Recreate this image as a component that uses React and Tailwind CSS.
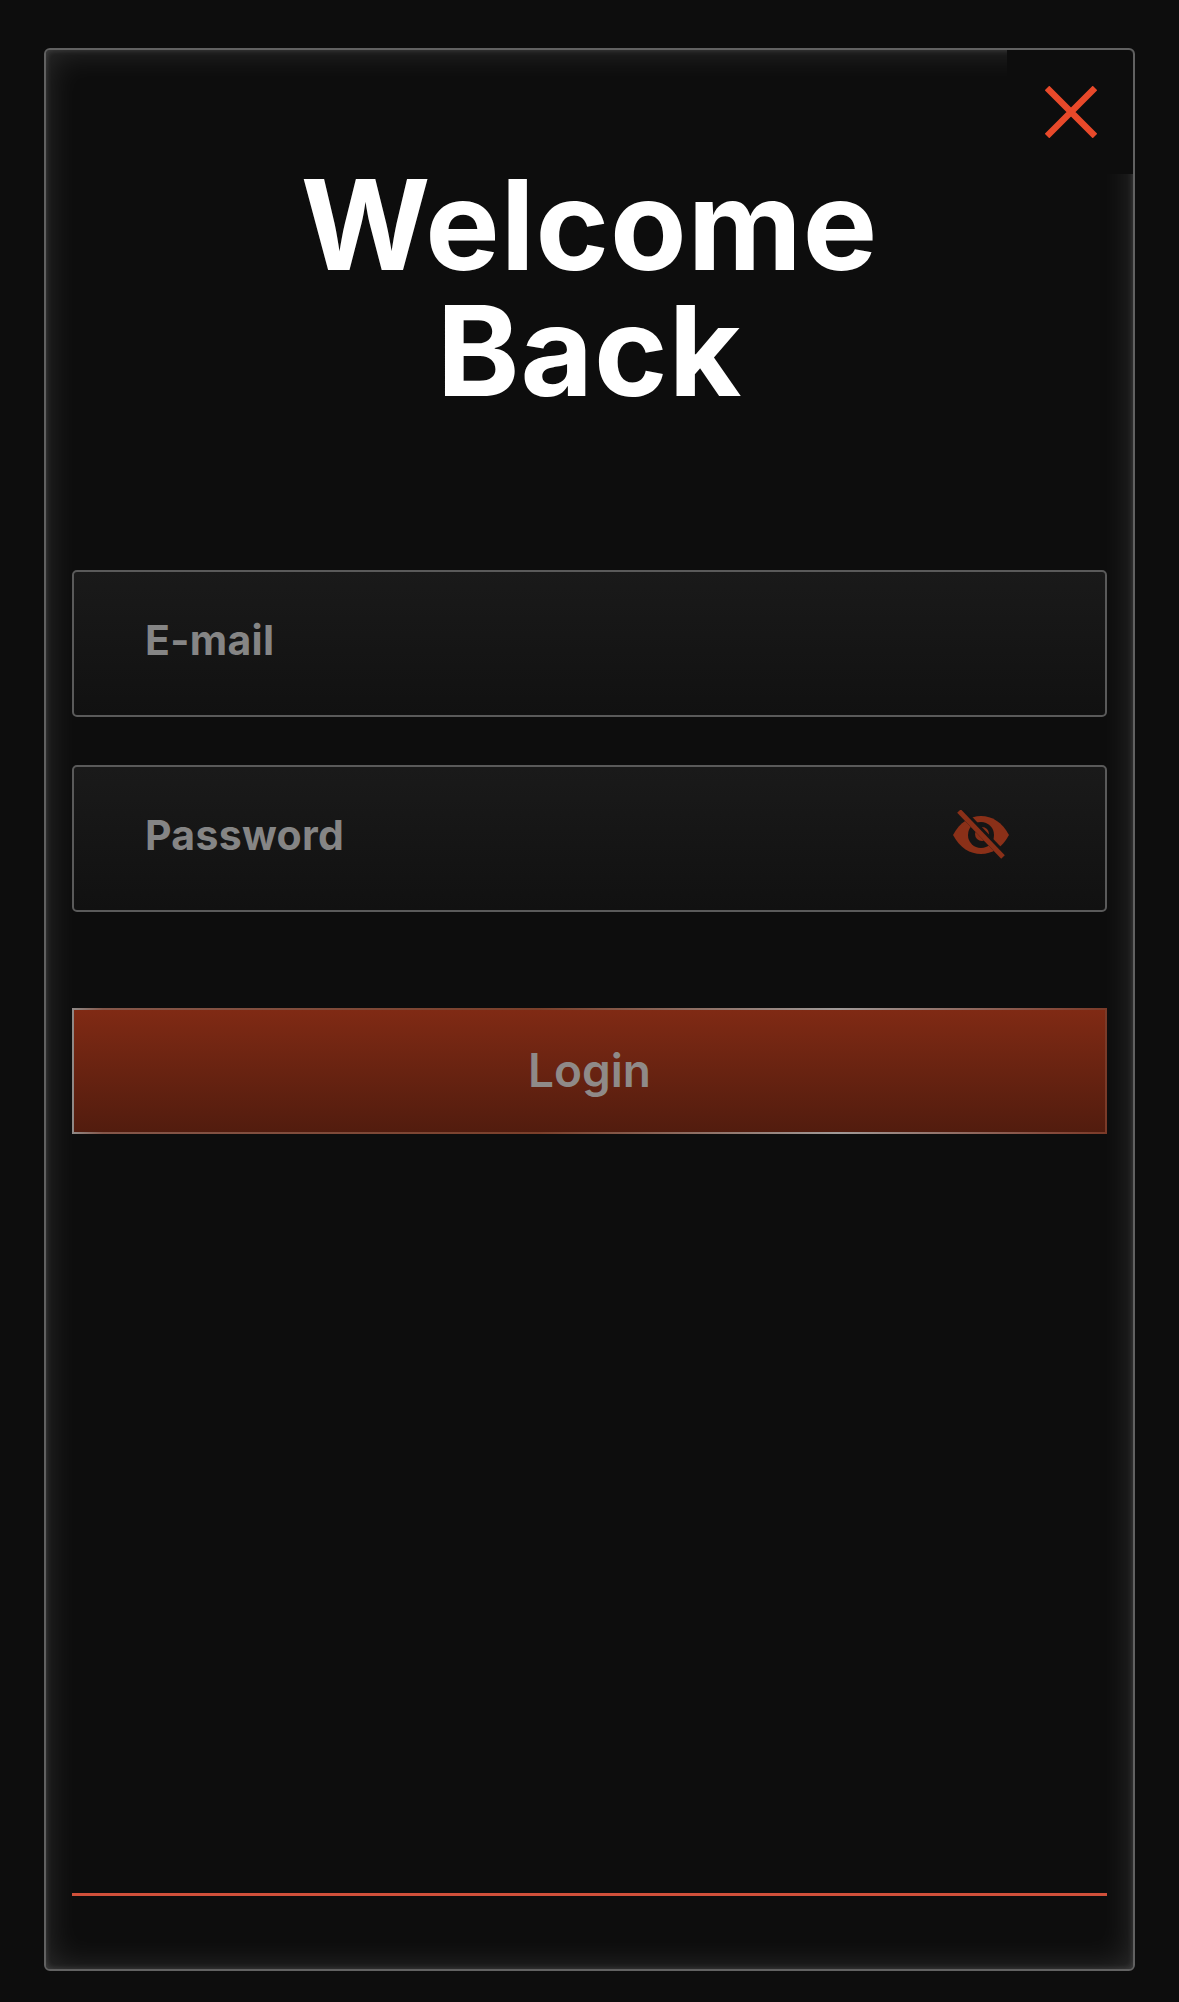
import React from "react";

function EyeOff() {
  return (
    <svg width="58" height="50" viewBox="0 0 58 50" className="block">
      <path d="M1 25 C8 12 18 6 29 6 C40 6 50 12 57 25 C50 38 40 44 29 44 C18 44 8 38 1 25 Z" fill="#8a3018" />
      <circle cx="29" cy="25" r="13" fill="#151515" />
      <circle cx="30" cy="24" r="7" fill="#8a3018" />
      <line x1="9" y1="1" x2="53" y2="47" stroke="#151515" strokeWidth="8" />
      <line x1="7" y1="1" x2="51" y2="47" stroke="#8a3018" strokeWidth="5" />
    </svg>
  );
}

function Field({ label, children }) {
  return (
    <div className="h-[147px] rounded-[5px] border-2 border-[#5a5a5a] bg-gradient-to-b from-[#1a1a1a] to-[#111111] pl-[71px] pr-[95px] pt-[43px] flex items-start justify-between">
      <span className="text-[41px] leading-[50px] font-bold text-[#858585] tracking-[0.3px]">{label}</span>
      {children}
    </div>
  );
}

export default function App() {
  return (
    <div className="w-[1179px] h-[2002px] bg-[#0d0d0d] pt-[48px] pl-[44px] pr-[44px] font-['Inter','Liberation_Sans',sans-serif]">
      <div className="relative h-[1923px] rounded-[6px] border-2 border-[#616161] shadow-[inset_0_0_34px_rgba(255,255,255,0.14),inset_0_0_6px_rgba(255,255,255,0.16)] bg-[#0d0d0d] px-[26px] pt-[112px]">
        <div className="absolute right-0 top-0 w-[126px] h-[124px] bg-[#0d0d0d] rounded-tr-[5px] flex items-center justify-center">
          <svg width="52" height="52" viewBox="0 0 52 52" className="mt-[-1px] ml-[2px]">
            <path d="M2 2 L50 50 M50 2 L2 50" stroke="#e8492a" strokeWidth="6.5" fill="none" />
          </svg>
        </div>

        <h1 className="text-center text-white text-[125px] leading-[126px] font-bold tracking-[1px]">
          Welcome
          <br />
          Back
        </h1>

        <div className="mt-[156px] flex flex-col gap-[48px]">
          <Field label="E-mail" />
          <Field label="Password">
            <EyeOff />
          </Field>
        </div>

        <div className="mt-[96px] h-[126px] p-[2px] bg-[linear-gradient(90deg,#8f8a88_0%,#85574a_3%,#7a3f2a_45%,#a09a98_74%,#85493a_95%,#7a3a28_100%)]">
          <div className="h-full bg-gradient-to-b from-[#802a14] to-[#521c0e] flex items-center justify-center">
            <span className="text-[46px] leading-none font-semibold text-[#8f8a88] mt-[-2px]">Login</span>
          </div>
        </div>

        <div className="mt-[759px] h-[3px] bg-[#d0503a]" />
      </div>
    </div>
  );
}
